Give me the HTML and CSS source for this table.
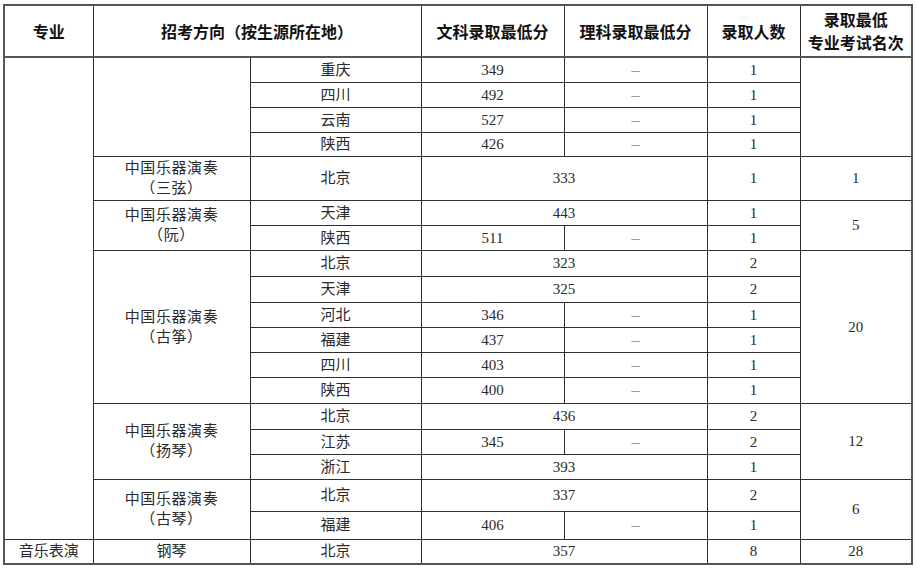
FILE: index.html
```html
<!DOCTYPE html>
<html lang="zh-CN">
<head>
<meta charset="utf-8">
<title>录取分数</title>
<link rel="stylesheet" href="styles.css">
</head>
<body>
<table class="grid">
  <colgroup>
    <col class="c1"><col class="c2"><col class="c3"><col class="c4"><col class="c5"><col class="c6"><col class="c7">
  </colgroup>
  <thead>
    <tr class="hd">
      <th>专业</th>
      <th colspan="2">招考方向（按生源所在地）</th>
      <th>文科录取最低分</th>
      <th>理科录取最低分</th>
      <th>录取人数</th>
      <th class="two"><span class="ln">录取最低</span><span class="ln">专业考试名次</span></th>
    </tr>
  </thead>
  <tbody>
    <tr class="h25">
      <td rowspan="18"></td>
      <td rowspan="4"></td>
      <td>重庆</td><td>349</td><td class="dash">–</td><td>1</td>
      <td rowspan="4"></td>
    </tr>
    <tr class="h25"><td>四川</td><td>492</td><td class="dash">–</td><td>1</td></tr>
    <tr class="h25"><td>云南</td><td>527</td><td class="dash">–</td><td>1</td></tr>
    <tr class="h24"><td>陕西</td><td>426</td><td class="dash">–</td><td>1</td></tr>

    <tr class="h44">
      <td class="two">中国乐器演奏<br>（三弦）</td>
      <td>北京</td><td colspan="2">333</td><td>1</td><td>1</td>
    </tr>

    <tr class="h25">
      <td rowspan="2" class="two">中国乐器演奏<br>（阮）</td>
      <td>天津</td><td colspan="2">443</td><td>1</td>
      <td rowspan="2">5</td>
    </tr>
    <tr class="h25"><td>陕西</td><td>511</td><td class="dash">–</td><td>1</td></tr>

    <tr class="h26">
      <td rowspan="6" class="two">中国乐器演奏<br>（古筝）</td>
      <td>北京</td><td colspan="2">323</td><td>2</td>
      <td rowspan="6">20</td>
    </tr>
    <tr class="h26"><td>天津</td><td colspan="2">325</td><td>2</td></tr>
    <tr class="h25"><td>河北</td><td>346</td><td class="dash">–</td><td>1</td></tr>
    <tr class="h25"><td>福建</td><td>437</td><td class="dash">–</td><td>1</td></tr>
    <tr class="h25"><td>四川</td><td>403</td><td class="dash">–</td><td>1</td></tr>
    <tr class="h26"><td>陕西</td><td>400</td><td class="dash">–</td><td>1</td></tr>

    <tr class="h26">
      <td rowspan="3" class="two">中国乐器演奏<br>（扬琴）</td>
      <td>北京</td><td colspan="2">436</td><td>2</td>
      <td rowspan="3">12</td>
    </tr>
    <tr class="h25"><td>江苏</td><td>345</td><td class="dash">–</td><td>2</td></tr>
    <tr class="h25"><td>浙江</td><td colspan="2">393</td><td>1</td></tr>

    <tr class="h32">
      <td rowspan="2" class="two">中国乐器演奏<br>（古琴）</td>
      <td>北京</td><td colspan="2">337</td><td>2</td>
      <td rowspan="2">6</td>
    </tr>
    <tr class="h28"><td>福建</td><td>406</td><td class="dash">–</td><td>1</td></tr>

    <tr class="h25">
      <td>音乐表演</td><td>钢琴</td><td>北京</td><td colspan="2">357</td><td>8</td><td>28</td>
    </tr>
  </tbody>
</table>
</body>
</html>
```

FILE: styles.css
```css
html, body {
  margin: 0;
  padding: 0;
  background: #ffffff;
}

body {
  padding: 4px 0 0 3px;
  font-family: "Liberation Serif", "Noto Sans CJK SC", serif;
  font-size: 15px;
  color: #2a2a2a;
  text-spacing-trim: space-all;
}

.grid {
  border-collapse: collapse;
  table-layout: fixed;
  width: 908px;
  border: 2px solid #555555;
}

.c1 { width: 89px; }
.c2 { width: 157px; }
.c3 { width: 171px; }
.c4 { width: 143px; }
.c5 { width: 143px; }
.c6 { width: 93px; }
.c7 { width: 112px; }

.grid th,
.grid td {
  border: 1px solid #2e2e2e;
  padding: 0;
  text-align: center;
  vertical-align: middle;
  line-height: 20px;
  overflow: hidden;
}

.grid th {
  font-family: "Noto Sans CJK SC", sans-serif;
  font-weight: 700;
  font-size: 16px;
  color: #111111;
  border-bottom: 2px solid #555555;
}

.grid th.two .ln {
  display: block;
  line-height: 23px;
  height: 23px;
}

.grid td.two {
  letter-spacing: 0.6px;
}

.hd { height: 52px; }
.h24 { height: 24px; }
.h25 { height: 25px; }
.h26 { height: 26px; }
.h28 { height: 28px; }
.h32 { height: 32px; }
.h44 { height: 44px; }

.grid td.dash {
  color: #9a9a9a;
  font-size: 16px;
}
```
